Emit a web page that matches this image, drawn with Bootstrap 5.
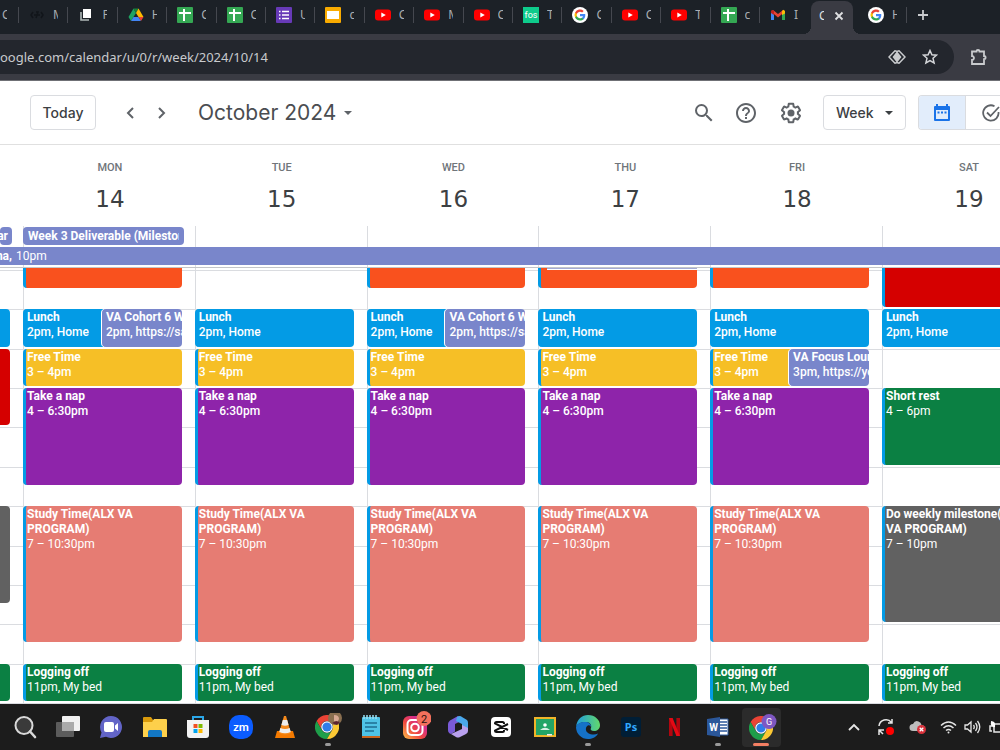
<!DOCTYPE html>
<html lang="en">
<head>
<meta charset="utf-8">
<meta name="viewport" content="width=device-width, initial-scale=1">
<title>Calendar - Week of October 14, 2024</title>
<link href="https://cdn.jsdelivr.net/npm/bootstrap@5.3.0/dist/css/bootstrap.min.css" rel="stylesheet">
<style>
:root { --line: #dadce0; --week-cols: 23px repeat(5, minmax(0, 1fr)) 118px; }
body { font-family: Roboto, "Liberation Sans", sans-serif; background: #fff; color: #3c4043; }
svg { display: block; flex: none; }
button { font: inherit; color: inherit; }
.plain { border: 0; background: none; padding: 0; }

/* browser tabs */
.tabstrip { display: grid; grid-template-columns: 18px repeat(15, minmax(0, 1fr)) 52px 42px 53px 94px; height: 34px; background: #1c2127; color: #c3c6ca; font: 12px/16px "Noto Sans", sans-serif; }
.tabstrip > * { height: 30px; min-width: 0; }
.btab { display: flex; align-items: center; gap: 8px; padding-left: 11px; position: relative; }
.btab.ruled::before { content: ""; position: absolute; left: 0; top: 7px; width: 1px; height: 16px; background: #45484f; }
.btab .ttl { width: 5px; overflow: hidden; text-align: left; white-space: nowrap; color: #a9adb2; }
.btab.first { padding-left: 2px; }
.btab.spaced { padding-left: 15px; }
.btab.current { align-self: end; height: 33px; background: #3a3b43; border-radius: 8px 8px 0 0; gap: 10px; padding: 0 0 4px 8px; }
.btab.current::before, .btab.current::after { content: ""; position: absolute; bottom: 0; width: 8px; height: 8px; }
.btab.current::before { left: -8px; background: radial-gradient(circle at 0 0, transparent 8px, #3a3b43 8px); }
.btab.current::after { right: -8px; background: radial-gradient(circle at 100% 0, transparent 8px, #3a3b43 8px); }
.btab.current .ttl { color: #dfe0e2; }
.toolbar { background: #3a3b43; height: 47px; border-bottom: 1px solid #6f7075; color: #c9cbce; }
.address { background: #23262d; height: 34px; border-radius: 0 17px 17px 0; }
.address input { background: none; border: 0; outline: 0; color: #c8cacd; font: 13px/20px "Noto Sans", sans-serif; padding: 0; }
.ext { margin: 0 12px 0 16px; }

/* calendar header */
.calbar { height: 64px; border-bottom: 1px solid #e0e0e0; padding-left: 30px; font-family: Inter, sans-serif; color: #3c4043; overflow: hidden; }
.boxed { border: 1px solid var(--line); border-radius: 4px; height: 35px; background-color: #fff; font-size: 14px; line-height: 20px; font-weight: 500; }
.today { width: 66px; }
.pager { margin-left: 18px; }
.monthname { font-size: 21px; line-height: 28px; color: #4a4d51; }
.help { padding: 0 21px 0 18px; }
select.boxed { appearance: none; width: 83px; padding: 0 12px; color: #3c4043; background: #fff url("data:image/svg+xml,%3Csvg xmlns='http://www.w3.org/2000/svg' viewBox='0 0 8 4'%3E%3Cpath d='M0 0h8L4 4z' fill='%233c4043'/%3E%3C/svg%3E") no-repeat right 12px center / 8px 4px; }
.seg { height: 35px; border: 1px solid var(--line); border-right: 0; border-radius: 4px 0 0 4px; overflow: hidden; width: 82px; margin-left: 12px; }
.seg .on { width: 49px; background: #e2edfb; color: #1a73e8; border-right: 1px solid var(--line); }

/* week */
.week { display: grid; grid-template-columns: var(--week-cols); overflow: hidden; }
.heads { height: 81px; padding-top: 15px; }
.heads > div { text-align: center; padding-left: 2px; }
.wide { width: 172px; }
.dow { font-size: 11px; line-height: 16px; font-weight: 500; color: #70757a; }
.dnum { font: 23px/32px "DejaVu Sans", sans-serif; color: #3c4043; margin-top: 7px; }
.allday { grid-template-rows: 21px 20px; border-bottom: 1px solid #c4c6c9; }
.vline { border-left: 1px solid var(--line); grid-row: 1 / -1; }
.pill { background: #7986cb; color: #fff; font-size: 12px; line-height: 18px; height: 18px; white-space: nowrap; overflow: hidden; }
.r1 { grid-row: 1; margin-top: 1px; border-radius: 4px; }
.r2 { grid-row: 2; grid-column: 1 / -1; }
.titled { margin-right: 11px; padding: 0 5px; }
.clip-end { display: flex; justify-content: flex-end; overflow: hidden; width: 12px; }
.stack { display: grid; flex: 1 0 auto; }
.stack > * { grid-area: 1 / 1; min-width: 0; }
.hours { display: grid; grid-template-rows: 2px repeat(11, minmax(39px, 1fr)) 1px; }
.hours div + div { border-top: 1px solid var(--line); }
.day { display: grid; grid-template-rows: 2px repeat(22, minmax(0, 1fr)) 1px; grid-template-columns: 1fr 1fr; border-left: 1px solid var(--line); padding-right: 13px; min-width: 0; }
.day:first-child { border-left: 0; }
.ev { grid-column: 1 / -1; margin: 0 0 2px -1px; border-left: 3px solid #039be5; border-radius: 4px; padding: 1px 0 0 1px; color: #fff; font-size: 12px; line-height: 15px; overflow: hidden; min-width: 0; }
.day:first-child .ev { border-left: 0; margin-left: 0; border-radius: 0 4px 4px 0; }
.ev b { display: block; font-weight: 700; }
.ev.left { grid-column: 1; border-top-right-radius: 0; border-bottom-right-radius: 0; }
.ev.right { grid-column: 2; border-color: #7986cb; white-space: nowrap; box-shadow: -1px 0 0 #fff; }
.ev.cut { border-top-left-radius: 0; border-top-right-radius: 0; }
.lav { background: #7986cb; } .blu { background: #039be5; } .org { background: #f9511e; } .yel { background: #f6bf26; }
.pur { background: #8e24aa; } .sal { background: #e67c73; } .grn { background: #0b8043; } .gry { background: #616161; } .red { background: #d50000; }
.h1s { grid-row: 1 / 3; } .h1 { grid-row: 1 / 4; } .h2 { grid-row: 4 / 6; } .h3 { grid-row: 6 / 8; } .h35 { grid-row: 6 / 10; }
.h4 { grid-row: 8 / 13; } .h46 { grid-row: 8 / 12; } .h7 { grid-row: 14 / 21; } .h710 { grid-row: 14 / 20; } .h79 { grid-row: 14 / 19; } .h11 { grid-row: 22 / 24; }
.prior { grid-row: 1; grid-column: 1 / -1; margin-left: 8px; height: 2px; background: #a3a9d4; border-bottom: 1px solid #fff; z-index: 1; }

/* taskbar */
.taskbar { display: grid; grid-template-columns: repeat(18, minmax(0, 1fr)) 217px; padding-left: 3px; height: 46px; background: #1c1c1c; color: #e6e6e6; overflow: hidden; }
.app { display: flex; align-items: center; justify-content: center; position: relative; }
.app.run::after { content: ""; position: absolute; bottom: 4px; width: 6px; height: 3px; border-radius: 2px; background: #9a9a9a; }
.app.active { background: #2b2b2b; border-radius: 4px; margin: 4px 2px 3px; }
.app.active::after { content: ""; position: absolute; bottom: 1px; width: 16px; height: 3px; border-radius: 2px; background: #f47f63; }
.tray > * { display: flex; justify-content: center; align-items: center; width: 32px; }
.tray .w30 { width: 30px; } .tray .w18 { width: 18px; }
</style>
</head>
<body class="d-flex flex-column min-vh-100">

<svg width="0" height="0" class="position-absolute" aria-hidden="true">
  <symbol id="sheet" viewBox="0 0 16 16"><rect width="16" height="16" rx="1" fill="#34a853"/><path d="M2 6h12M7 2v12" stroke="#fff" stroke-width="2"/></symbol>
  <symbol id="yt" viewBox="0 0 16 16"><rect y="2.500" width="16" height="11" rx="3" fill="#f00"/><path d="M6.300 5.500v5l4.500-2.500z" fill="#fff"/></symbol>
  <symbol id="goog" viewBox="0 0 32 32"><circle cx="16" cy="16" r="16" fill="#fff"/><g transform="translate(4 4)"><path fill="#4285f4" d="M22.560 12.250c0-.78-.07-1.530-.2-2.250H12v4.260h5.920a5.060 5.060 0 0 1-2.200 3.320v2.770h3.570c2.080-1.920 3.270-4.740 3.270-8.100z"/><path fill="#34a853" d="M12 23c2.970 0 5.460-.98 7.280-2.660l-3.570-2.770c-.98.66-2.230 1.060-3.710 1.060-2.860 0-5.290-1.930-6.160-4.530H2.180v2.840A11 11 0 0 0 12 23z"/><path fill="#fbbc05" d="M5.840 14.100a6.600 6.600 0 0 1 0-4.200V7.060H2.180a11 11 0 0 0 0 9.880z"/><path fill="#ea4335" d="M12 5.380c1.620 0 3.060.56 4.210 1.640l3.150-3.150A11 11 0 0 0 2.180 7.060L5.840 9.900C6.710 7.300 9.140 5.380 12 5.380z"/></g></symbol>
  <symbol id="chrome" viewBox="0 0 24 24"><path fill="#ea4335" d="M1.600 6A12 12 0 0 1 22.400 6H12a6 6 0 0 0-5.200 9z"/><path fill="#1e9e4a" d="M1.600 6 6.800 15A6 6 0 0 0 17.200 15L12 24A12 12 0 0 1 1.600 6z"/><path fill="#fcc934" d="M22.400 6A12 12 0 0 1 12 24L17.200 15A6 6 0 0 0 12 6z"/><circle cx="12" cy="12" r="5.800" fill="#fff"/><circle cx="12" cy="12" r="4.600" fill="#2f7de9"/></symbol>
</svg>

<nav class="tabstrip" aria-label="Browser tabs">
  <button class="plain btab first"><span class="ttl">C</span></button>
  <button class="plain btab ruled"><svg width="16" height="16" viewBox="0 0 16 16" fill="none" stroke="#11151a" stroke-width="1.500"><path d="M4 5 2 8l2 3M12 5l2 3-2 3M5 8h6M7 5h2l-2 6"/></svg><span class="ttl">M</span></button>
  <button class="plain btab ruled"><svg width="16" height="16" viewBox="0 0 16 16"><path d="M3 5v8h8" fill="none" stroke="#aeb8b8" stroke-width="1.600"/><rect x="5" y="2" width="8" height="9" fill="#fff"/></svg><span class="ttl">F</span></button>
  <button class="plain btab ruled"><svg width="16" height="16" viewBox="0 0 16 16"><path d="M5.500 1.500 8 6 3 14 .5 10z" fill="#1ea362"/><path d="M5.500 1.500h5L8 6z" fill="#188038"/><path d="M10.500 1.500 15.500 10h-5L8 6z" fill="#ffba00"/><path d="M5.500 10h5L13 14H3z" fill="#4285f4"/><path d="M10.500 10h5L13 14z" fill="#ea4335"/></svg><span class="ttl">H</span></button>
  <button class="plain btab ruled"><svg width="16" height="16"><use href="#sheet"/></svg><span class="ttl">C</span></button>
  <button class="plain btab ruled"><svg width="16" height="16"><use href="#sheet"/></svg><span class="ttl">C</span></button>
  <button class="plain btab ruled"><svg width="16" height="16" viewBox="0 0 16 16"><rect width="16" height="16" rx="1" fill="#673ab7"/><path d="M3 4.500h1.500M3 8h1.500M3 11.500h1.500M6 4.500h7M6 8h7M6 11.500h7" stroke="#fff" stroke-width="1.600"/></svg><span class="ttl">U</span></button>
  <button class="plain btab ruled"><svg width="16" height="16" viewBox="0 0 16 16"><rect width="16" height="16" rx="1" fill="#f9ab00"/><rect x="2" y="4" width="12" height="8" fill="#fff"/></svg><span class="ttl">c</span></button>
  <button class="plain btab ruled"><svg width="16" height="16"><use href="#yt"/></svg><span class="ttl">C</span></button>
  <button class="plain btab ruled"><svg width="16" height="16"><use href="#yt"/></svg><span class="ttl">M</span></button>
  <button class="plain btab ruled"><svg width="16" height="16"><use href="#yt"/></svg><span class="ttl">C</span></button>
  <button class="plain btab ruled"><svg width="16" height="16" viewBox="0 0 16 16"><rect width="16" height="16" fill="#0ecb8b"/><text x="8" y="11" text-anchor="middle" font-family="Roboto" font-size="9" fill="#fff">fos</text></svg><span class="ttl">T</span></button>
  <button class="plain btab ruled"><svg width="16" height="16"><use href="#goog"/></svg><span class="ttl">C</span></button>
  <button class="plain btab ruled"><svg width="16" height="16"><use href="#yt"/></svg><span class="ttl">C</span></button>
  <button class="plain btab ruled"><svg width="16" height="16"><use href="#yt"/></svg><span class="ttl">T</span></button>
  <button class="plain btab ruled"><svg width="16" height="16"><use href="#sheet"/></svg><span class="ttl">c</span></button>
  <button class="plain btab ruled"><svg width="16" height="16" viewBox="0 0 16 16"><path d="M1 4v9h3V7z" fill="#4285f4"/><path d="M15 4v9h-3V7z" fill="#34a853"/><path d="M1 4.500 3 3l5 4 5-4 2 1.500L8 10.500z" fill="#ea4335"/><path d="M12 4l1.500-1.200L15 4v2.500L12 8z" fill="#fbbc04"/><path d="M1 4l1-1 2 1v4L1 6z" fill="#c5221f"/></svg><span class="ttl">I</span></button>
  <button class="plain btab current"><span class="ttl">C</span><svg width="10" height="10" viewBox="0 0 10 10" stroke="#dfe0e2" stroke-width="1.800"><path d="m1.500 1.500 7 7m0-7-7 7"/></svg></button>
  <button class="plain btab spaced"><svg width="16" height="16"><use href="#goog"/></svg><span class="ttl">H</span></button>
  <button class="plain btab ruled" aria-label="New tab"><svg width="12" height="12" viewBox="0 0 12 12" stroke="#c9cbce" stroke-width="1.800"><path d="M6 1v10M1 6h10"/></svg></button>
</nav>

<div class="toolbar d-flex align-items-center">
  <div class="address flex-grow-1 d-flex align-items-center pe-3">
    <input class="flex-grow-1" type="text" aria-label="Address" value="oogle.com/calendar/u/0/r/week/2024/10/14">
    <button class="plain me-3" aria-label="Page lens"><svg width="18" height="14" viewBox="0 0 18 14" fill="none" stroke="#c9cbce" stroke-width="1.500"><path d="M9 1.500 7 .8 1 7l6 6.200 2-.7M9 1.500l2-.7L17 7l-6 6.200-2-.7"/><path d="M9 2.500 12.500 7 9 11.500 5.500 7z" fill="#c9cbce"/></svg></button>
    <button class="plain" aria-label="Bookmark"><svg width="16" height="16" viewBox="0 0 16 16" fill="none" stroke="#d4d6d9" stroke-width="1.500"><path d="m8 1.500 1.900 4.300 4.600.4-3.500 3.100 1.100 4.600L8 11.500l-4.100 2.400L5 9.300 1.500 6.200l4.600-.4z"/></svg></button>
  </div>
  <button class="plain ext" aria-label="Extensions"><svg width="18" height="18" viewBox="0 0 18 18" fill="none" stroke="#c9cbce" stroke-width="1.800"><path d="M2 3.500h4.500a1.500 1.500 0 0 1 3 0H14V8a1.600 1.600 0 0 1 0 3.200V16H2v-4a2 2 0 0 0 0-4z"/></svg></button>
</div>

<header class="calbar d-flex align-items-center">
  <button class="boxed today p-0">Today</button>
  <button class="plain pager px-2" aria-label="Previous week"><svg width="16" height="16" viewBox="0 0 16 16" fill="none" stroke="#5f6368" stroke-width="2"><path d="m11 3-5 5 5 5"/></svg></button>
  <button class="plain px-2" aria-label="Next week"><svg width="16" height="16" viewBox="0 0 16 16" fill="none" stroke="#5f6368" stroke-width="2"><path d="m5 3 5 5-5 5"/></svg></button>
  <button class="plain ms-3 ps-1 monthname d-flex align-items-center gap-2">October 2024 <svg width="8" height="4" viewBox="0 0 8 4"><path d="M0 0h8L4 4z" fill="#5f6368"/></svg></button>
  <div class="ms-auto d-flex align-items-center">
    <button class="plain" aria-label="Search"><svg width="24" height="24" viewBox="0 0 24 24" fill="#5f6368"><path d="M15.500 14h-.79l-.28-.27A6.470 6.470 0 0 0 16 9.500 6.500 6.500 0 1 0 9.500 16c1.610 0 3.090-.59 4.230-1.570l.27.28v.79l5 4.990L20.490 19l-4.990-5zm-6 0C7.010 14 5 11.990 5 9.500S7.010 5 9.500 5 14 7.010 14 9.500 11.990 14 9.500 14z"/></svg></button>
    <button class="plain help" aria-label="Support"><svg width="24" height="24" viewBox="0 0 24 24" fill="#5f6368"><path d="M11 18h2v-2h-2v2zm1-16C6.480 2 2 6.480 2 12s4.480 10 10 10 10-4.480 10-10S17.520 2 12 2zm0 18c-4.410 0-8-3.590-8-8s3.590-8 8-8 8 3.590 8 8-3.590 8-8 8zm0-14c-2.210 0-4 1.790-4 4h2c0-1.100.9-2 2-2s2 .9 2 2c0 2-3 1.750-3 5h2c0-2.250 3-2.500 3-5 0-2.210-1.790-4-4-4z"/></svg></button>
    <button class="plain pe-3 me-1" aria-label="Settings"><svg width="24" height="24" viewBox="0 0 24 24" fill="#5f6368"><path d="M13.850 22.250h-3.700c-.74 0-1.360-.54-1.450-1.270l-.27-1.890c-.27-.14-.53-.29-.79-.46l-1.800.72c-.7.26-1.470-.03-1.810-.65L2.200 15.530c-.35-.66-.2-1.440.36-1.880l1.530-1.190c-.01-.15-.02-.3-.02-.46 0-.15.01-.31.02-.46l-1.520-1.190c-.59-.45-.74-1.260-.37-1.880l1.850-3.190c.34-.62 1.110-.9 1.790-.63l1.810.73c.26-.17.52-.32.78-.46l.27-1.910c.09-.7.71-1.250 1.440-1.250h3.700c.74 0 1.360.54 1.450 1.270l.27 1.890c.27.14.53.29.79.46l1.800-.72c.71-.26 1.480.03 1.820.65l1.840 3.180c.36.66.2 1.440-.36 1.880l-1.520 1.190c.01.15.02.3.02.46s-.01.31-.02.46l1.520 1.190c.56.45.72 1.230.37 1.860l-1.860 3.220c-.34.62-1.110.9-1.800.63l-1.800-.72c-.26.17-.52.32-.78.46l-.27 1.910c-.1.68-.72 1.220-1.460 1.220zm-3.230-2h2.760l.37-2.550.53-.22c.44-.18.88-.44 1.340-.78l.45-.34 2.380.96 1.380-2.400-2.030-1.580.07-.56c.03-.26.06-.51.06-.78s-.03-.53-.06-.78l-.07-.56 2.030-1.580-1.390-2.400-2.390.96-.45-.35c-.42-.32-.87-.58-1.330-.77l-.52-.22-.37-2.550h-2.760l-.37 2.550-.53.21c-.44.19-.88.44-1.340.79l-.45.33-2.380-.95-1.390 2.390 2.030 1.580-.07.56a7 7 0 0 0-.06.79c0 .26.02.53.06.78l.07.56-2.030 1.580 1.380 2.400 2.390-.96.45.35c.43.33.86.58 1.330.77l.53.22.38 2.550z"/><circle cx="12" cy="12" r="3.500"/></svg></button>
    <select class="boxed" aria-label="View"><option>Week</option></select>
    <div class="seg d-flex">
      <button class="plain on d-flex align-items-center justify-content-center" aria-label="Calendar"><svg width="20" height="20" viewBox="0 0 20 20"><path fill="#1a73e8" d="M4 1h2v2h8V1h2v2h1a1 1 0 0 1 1 1v13a1 1 0 0 1-1 1H3a1 1 0 0 1-1-1V4a1 1 0 0 1 1-1h1zM4 7v9h12V7z"/><path d="M5.500 9.500h9" stroke="#1a73e8" stroke-width="2" stroke-dasharray="2 1.500"/></svg></button>
      <button class="plain ps-3 d-flex align-items-center" aria-label="Tasks"><svg width="18" height="18" viewBox="0 0 18 18" fill="none" stroke="#5f6368" stroke-width="1.800"><path d="M12.500 2.200A7.700 7.700 0 1 0 16.500 8"/><path d="m5 8.500 3.500 3.500L17 3"/></svg></button>
    </div>
  </div>
</header>

<section class="week heads">
  <div></div>
  <div><div class="dow">MON</div><div class="dnum">14</div></div>
  <div><div class="dow">TUE</div><div class="dnum">15</div></div>
  <div><div class="dow">WED</div><div class="dnum">16</div></div>
  <div><div class="dow">THU</div><div class="dnum">17</div></div>
  <div><div class="dow">FRI</div><div class="dnum">18</div></div>
  <div class="wide"><div class="dow">SAT</div><div class="dnum">19</div></div>
</section>

<section class="week allday" aria-label="All-day events">
  <div class="vline" style="grid-column:2"></div><div class="vline" style="grid-column:3"></div><div class="vline" style="grid-column:4"></div>
  <div class="vline" style="grid-column:5"></div><div class="vline" style="grid-column:6"></div><div class="vline" style="grid-column:7"></div>
  <div class="pill r1 clip-end pe-1" style="grid-column:1"><b>ar</b></div>
  <div class="pill r1 titled" style="grid-column:2"><div class="overflow-hidden"><b>Week 3 Deliverable (Mileston</b></div></div>
  <div class="pill r2 d-flex"><b class="clip-end">na,</b><span class="ps-1">10pm</span></div>
</section>

<main class="stack">
  <div class="hours" aria-hidden="true"><div></div><div></div><div></div><div></div><div></div><div></div><div></div><div></div><div></div><div></div><div></div><div></div><div></div></div>
  <div class="week">
    <div class="day">
      <div class="ev blu h2"></div><div class="ev red h35"></div><div class="ev gry h79"></div><div class="ev grn h11"></div>
    </div>
    <div class="day">
      <div class="ev org cut h1s"></div>
      <div class="ev blu left h2"><b>Lunch</b>2pm, Home</div><div class="ev lav right h2"><b>VA Cohort 6 W</b>2pm, https://sa</div>
      <div class="ev yel h3"><b>Free Time</b>3 – 4pm</div>
      <div class="ev pur h4"><b>Take a nap</b>4 – 6:30pm</div>
      <div class="ev sal h7"><b>Study Time(ALX VA PROGRAM)</b>7 – 10:30pm</div>
      <div class="ev grn h11"><b>Logging off</b>11pm, My bed</div>
    </div>
    <div class="day">
      <div class="ev blu h2"><b>Lunch</b>2pm, Home</div>
      <div class="ev yel h3"><b>Free Time</b>3 – 4pm</div>
      <div class="ev pur h4"><b>Take a nap</b>4 – 6:30pm</div>
      <div class="ev sal h7"><b>Study Time(ALX VA PROGRAM)</b>7 – 10:30pm</div>
      <div class="ev grn h11"><b>Logging off</b>11pm, My bed</div>
    </div>
    <div class="day">
      <div class="ev org cut h1s"></div>
      <div class="ev blu left h2"><b>Lunch</b>2pm, Home</div><div class="ev lav right h2"><b>VA Cohort 6 W</b>2pm, https://sa</div>
      <div class="ev yel h3"><b>Free Time</b>3 – 4pm</div>
      <div class="ev pur h4"><b>Take a nap</b>4 – 6:30pm</div>
      <div class="ev sal h7"><b>Study Time(ALX VA PROGRAM)</b>7 – 10:30pm</div>
      <div class="ev grn h11"><b>Logging off</b>11pm, My bed</div>
    </div>
    <div class="day">
      <div class="ev org cut h1s"></div><div class="prior"></div>
      <div class="ev blu h2"><b>Lunch</b>2pm, Home</div>
      <div class="ev yel h3"><b>Free Time</b>3 – 4pm</div>
      <div class="ev pur h4"><b>Take a nap</b>4 – 6:30pm</div>
      <div class="ev sal h7"><b>Study Time(ALX VA PROGRAM)</b>7 – 10:30pm</div>
      <div class="ev grn h11"><b>Logging off</b>11pm, My bed</div>
    </div>
    <div class="day">
      <div class="ev org cut h1s"></div>
      <div class="ev blu h2"><b>Lunch</b>2pm, Home</div>
      <div class="ev yel left h3"><b>Free Time</b>3 – 4pm</div><div class="ev lav right h3"><b>VA Focus Loun</b>3pm, https://yo</div>
      <div class="ev pur h4"><b>Take a nap</b>4 – 6:30pm</div>
      <div class="ev sal h7"><b>Study Time(ALX VA PROGRAM)</b>7 – 10:30pm</div>
      <div class="ev grn h11"><b>Logging off</b>11pm, My bed</div>
    </div>
    <div class="day wide">
      <div class="ev red cut h1"></div>
      <div class="ev blu h2"><b>Lunch</b>2pm, Home</div>
      <div class="ev grn h46"><b>Short rest</b>4 – 6pm</div>
      <div class="ev gry h710"><b>Do weekly milestone(<br>VA PROGRAM)</b>7 – 10pm</div>
      <div class="ev grn h11"><b>Logging off</b>11pm, My bed</div>
    </div>
  </div>
</main>

<footer class="taskbar">
  <button class="plain app" aria-label="Search"><svg width="24" height="24" viewBox="0 0 24 24" fill="none"><circle cx="11" cy="10.500" r="8.500" fill="#3a3a3a" stroke="#d9d9d9" stroke-width="2"/><path d="m17 16.500 5 5.500" stroke="#d9d9d9" stroke-width="2.600" stroke-linecap="round"/></svg></button>
  <button class="plain app" aria-label="Task view"><svg width="24" height="24" viewBox="0 0 24 24"><rect y="7" width="18" height="15" rx="1" fill="#5c5c5c"/><rect x="6" y="1" width="18" height="15" rx="1" fill="#f0f0f0"/><path d="M6 7h12v9H6z" fill="#aaa"/></svg></button>
  <button class="plain app" aria-label="Chat"><svg width="24" height="24" viewBox="0 0 24 24"><path d="M12 1a11 11 0 1 1-5 20.800L1 23l1.500-5.500A11 11 0 0 1 12 1z" fill="#6264c7"/><rect x="5" y="7" width="10" height="10" rx="2" fill="#fff"/><path d="m16 10.500 3-2.500v8l-3-2.500z" fill="#fff"/></svg></button>
  <button class="plain app" aria-label="Files"><svg width="24" height="24" viewBox="0 0 24 24"><path d="M0 3a1 1 0 0 1 1-1h7l2 3h13v4H0z" fill="#d99a0b"/><path d="M0 7h9l2-3h12a1 1 0 0 1 1 1v17H0z" fill="#fdd04b"/><path d="M5 22v-5a2 2 0 0 1 2-2h10a2 2 0 0 1 2 2v5z" fill="#1277c4"/></svg></button>
  <button class="plain app" aria-label="Store"><svg width="24" height="24" viewBox="0 0 24 24"><path d="M7 6V2h10v4" fill="none" stroke="#2ba7e8" stroke-width="2"/><path d="M1 5h22v15a3 3 0 0 1-3 3H4a3 3 0 0 1-3-3z" fill="#f3f3f3"/><path d="M7.500 9h4v4h-4z" fill="#f25022"/><path d="M12.500 9h4v4h-4z" fill="#7fba00"/><path d="M7.500 14h4v4h-4z" fill="#00a4ef"/><path d="M12.500 14h4v4h-4z" fill="#ffb900"/></svg></button>
  <button class="plain app" aria-label="Zoom"><svg width="24" height="24" viewBox="0 0 24 24"><rect width="24" height="24" rx="10" fill="#0b5cff"/><text x="12" y="16" text-anchor="middle" font-family="Lato" font-weight="700" font-size="12" fill="#fff">zm</text></svg></button>
  <button class="plain app" aria-label="VLC"><svg width="22" height="24" viewBox="0 0 22 24"><path d="m3 16-2 7h20l-2-7z" fill="#f47a00"/><path d="M10 1h2l5 17q-6 3-12 0z" fill="#f58a1c"/><path d="m8.800 5-1.400 5q3.600 1.500 7.200 0l-1.400-5zM6.300 13l-1 4q5.700 2.500 11.400 0l-1-4q-4.700 2-9.400 0z" fill="#eee"/></svg></button>
  <button class="plain app run" aria-label="Chrome"><svg width="28" height="28" viewBox="0 0 28 28"><svg x="1" y="2" width="24" height="24"><use href="#chrome"/></svg><circle cx="21" cy="5" r="7" fill="#8a6f50"/><path d="M20 2q5 0 5 4l-2 4-3-2z" fill="#d8a993"/><path d="m18 10 4-2 4 1-3 3z" fill="#5b2330"/></svg></button>
  <button class="plain app" aria-label="Notepad"><svg width="20" height="24" viewBox="0 0 20 24"><rect x="1" y="2" width="18" height="21" rx="1" fill="#4fc3e6"/><path d="M1 21h18v2H1z" fill="#c8641e"/><path d="M3 0v4m3-4v4m3-4v4m3-4v4m3-4v4" stroke="#9adff2" stroke-width="1.500"/><path d="M4 8h12M4 12h12M4 16h9" stroke="#1f6f92" stroke-width="1.500"/></svg></button>
  <button class="plain app" aria-label="Instagram"><svg width="32" height="32" viewBox="0 0 32 32"><defs><linearGradient id="ig" x1="0" y1="1" x2="1" y2="0"><stop offset="0" stop-color="#fdc24a"/><stop offset=".4" stop-color="#f0483e"/><stop offset=".7" stop-color="#d62d86"/><stop offset="1" stop-color="#8a3ac8"/></linearGradient></defs><rect x="4" y="5" width="24" height="23" rx="6" fill="url(#ig)"/><rect x="8.500" y="9" width="15" height="15" rx="4" fill="none" stroke="#fff" stroke-width="2"/><circle cx="16" cy="16.500" r="3.800" fill="none" stroke="#fff" stroke-width="2"/><circle cx="25" cy="7.500" r="7.500" fill="#f2705c"/><text x="25" y="11.500" text-anchor="middle" font-family="Roboto" font-size="11" fill="#26120f">2</text></svg></button>
  <button class="plain app" aria-label="Microsoft 365"><svg width="22" height="24" viewBox="0 0 22 24"><path d="M11 1 3 5.500Q1 7 1 9v6q0 3 3 4l4-2.500V9l8-4z" fill="#7a5bd8"/><path d="M10 2q3-2 5 0l5 3q1 1 1 3v7l-6-3V9L9 6z" fill="#4aa8ec"/><path d="m21 13v3q0 2-2 3l-6 3q-2 1-4 0l-5-3 11-5v-4z" fill="#b9a0ee"/></svg></button>
  <button class="plain app" aria-label="CapCut"><svg width="20" height="20" viewBox="0 0 20 20"><rect width="20" height="20" rx="4" fill="#fff"/><path d="M17 7 4 13.500Q4 15 5.500 15h6q1.500 0 1.500-1.500V13M17 13 4 6.500Q4 5 5.500 5h6Q13 5 13 6.500V7" fill="none" stroke="#111" stroke-width="2"/></svg></button>
  <button class="plain app" aria-label="Classroom"><svg width="22" height="20" viewBox="0 0 22 20"><rect x="1" y="1" width="20" height="18" fill="#23a566" stroke="#f0b429" stroke-width="2"/><circle cx="11" cy="8" r="1.800" fill="#fff"/><path d="M6 13q5-4.500 10 0z" fill="#d5f0e2"/><path d="M13 17h5v1.500h-5z" fill="#eee"/></svg></button>
  <button class="plain app run" aria-label="Edge"><svg width="24" height="24" viewBox="0 0 24 24"><defs><linearGradient id="eg"><stop offset="0" stop-color="#1f9de0"/><stop offset="1" stop-color="#62d86b"/></linearGradient></defs><path d="M0 12C1 4 6 0 12 0c7 0 12 5 12 10 0 4-3 6-6 6s-4-1.500-3-3c1-3-1-6-5-6C5 7 1 9 0 12z" fill="url(#eg)"/><path d="M0 12C1 9 4 7 9 7c4 0 6 2 6 5-1-1.500-2-2-3-1.500-3 1-4 9 6 9q2 0 4-1c-2 4-6 5.500-10 5.500A12 12 0 0 1 0 12z" fill="#1572c8"/></svg></button>
  <button class="plain app" aria-label="Photoshop"><svg width="20" height="20" viewBox="0 0 20 20"><rect width="20" height="20" rx="3" fill="#001e36"/><text x="10" y="14" text-anchor="middle" font-family="Noto Sans" font-weight="700" font-size="11" fill="#31a8ff">Ps</text></svg></button>
  <button class="plain app" aria-label="Netflix"><svg width="11" height="18" viewBox="0 0 11 18"><path d="M0 0h3.600v18H0zM7.400 0H11v18H7.400z" fill="#b1060f"/><path d="M0 0h3.600L11 18H7.400z" fill="#e50914"/></svg></button>
  <button class="plain app run" aria-label="Word"><svg width="22" height="22" viewBox="0 0 22 22"><path d="M11 3h10v16H11z" fill="#fff" stroke="#2b579a"/><path d="M13 6h7M13 9h7M13 12h7M13 15h7" stroke="#2b579a" stroke-width="1.300"/><path d="m0 3 13-2v20L0 19z" fill="#2b579a"/><text x="6.500" y="15" text-anchor="middle" font-family="Roboto" font-weight="700" font-size="10" fill="#fff">W</text></svg></button>
  <button class="plain app active" aria-label="Chrome, work profile"><svg width="32" height="28" viewBox="0 0 32 28"><svg x="4" y="2" width="24" height="24"><use href="#chrome"/></svg><circle cx="24" cy="6" r="6" fill="#fff" opacity="0"/><circle cx="24" cy="5.500" r="7.500" fill="#7e57c2" transform="translate(0 2)"/><text x="24" y="11" text-anchor="middle" font-family="Roboto" font-size="9" fill="#fff">G</text></svg></button>
  <div class="tray d-flex justify-content-end">
    <button class="plain" aria-label="Hidden icons"><svg width="12" height="8" viewBox="0 0 12 8" fill="none" stroke="#e6e6e6" stroke-width="1.800"><path d="m1 7 5-5 5 5"/></svg></button>
    <button class="plain" aria-label="Sync"><svg width="18" height="18" viewBox="0 0 18 18" fill="none" stroke="#e6e6e6" stroke-width="1.500"><path d="M2 8a7 7 0 0 1 12.500-3.500M15 1v4h-4M2 17v-5h5M2 12l4 4"/><circle cx="13" cy="13" r="4" fill="red" stroke="none"/></svg></button>
    <button class="plain" aria-label="Cloud storage"><svg width="18" height="14" viewBox="0 0 18 14"><path d="M4 11a3.500 3.500 0 0 1 0-7Q6 0 9.500 1.500 12 2 12.500 5 15 5 16 8l-3 3z" fill="#bdbdbd"/><circle cx="12.500" cy="9.500" r="4.500" fill="#d8303a"/><path d="m10.700 7.700 3.600 3.600m0-3.600-3.600 3.600" stroke="#fff" stroke-width="1.300"/></svg></button>
    <button class="plain w30" aria-label="Wi-Fi"><svg width="17" height="13" viewBox="0 0 17 13" fill="none" stroke="#e6e6e6" stroke-width="1.500"><path d="M1 4.500q7.500-7 15 0M3.500 7q5-4.500 10 0M6 9.500q2.500-2 5 0"/><circle cx="8.500" cy="11.500" r="1" fill="#e6e6e6" stroke="none"/></svg></button>
    <button class="plain w18" aria-label="Volume"><svg width="17" height="14" viewBox="0 0 17 14" fill="none" stroke="#e6e6e6" stroke-width="1.300"><path d="M1 5h2.500L7 2v10L3.500 9H1zM9.500 5q1.500 2 0 4M11.500 3q3 4 0 8M13.500 1q4.500 6 0 12"/></svg></button>
    <button class="plain w18 justify-content-end" aria-label="Battery"><svg width="11" height="14" viewBox="0 0 11 14"><path d="M11 4H5v8h6M3 6H1v5h2" fill="none" stroke="#e6e6e6" stroke-width="1.500"/><path d="M2 1q5 0 4 6-5 1-4-6z" fill="#fff"/></svg></button>
  </div>
</footer>

<script src="https://cdn.jsdelivr.net/npm/bootstrap@5.3.0/dist/js/bootstrap.bundle.min.js"></script>
</body>
</html>
